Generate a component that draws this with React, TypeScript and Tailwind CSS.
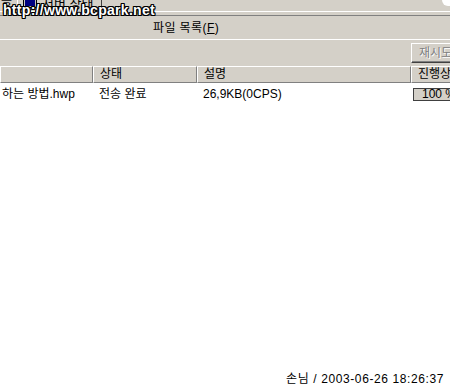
import React from "react";

const F = { fontFamily: '"Liberation Sans", "Noto Sans CJK KR", sans-serif' } as React.CSSProperties;

function HeaderCell({ w, children }: { w: string; children?: React.ReactNode }) {
  return (
    <div
      className={`${w} h-full shrink-0 border-t border-l border-t-white border-l-white border-r border-b border-r-[#808080] border-b-[#808080] bg-[#d4d0c8] pl-[6px] text-[12px] leading-[15px] text-black overflow-hidden whitespace-nowrap`}
    >
      {children}
    </div>
  );
}

export default function App() {
  return (
    <div className="relative w-[450px] h-[390px] bg-white overflow-hidden flex flex-col" style={F}>
      {/* top tab strip */}
      <div className="h-[11px] bg-[#d4d0c8] flex items-start shrink-0 overflow-hidden">
        <div className="w-[17px] text-[12px] leading-[12px] -mt-[5px] pl-[1px]">응</div>
        <div className="w-[85px] h-[11px] border-l border-l-white border-r border-r-[#404040] flex items-start gap-[4px] pl-[4px] overflow-hidden">
          <svg width="16" height="12" viewBox="0 0 16 12" className="-mt-[2px]">
            <rect x="1.5" y="0.5" width="13" height="9" fill="#c0c0c0" stroke="#000" />
            <rect x="3" y="2" width="10" height="6" fill="#000080" />
          </svg>
          <span className="text-[13px] leading-[13px] -mt-[3px]">서버 상태</span>
        </div>
      </div>
      <div className="h-px bg-white shrink-0" />
      <div className="h-[3px] bg-[#d4d0c8] shrink-0" />
      <div className="h-px bg-[#808080] shrink-0" />
      {/* title */}
      <div className="h-[23px] bg-[#d4d0c8] shrink-0 flex items-center pl-[153px] text-[12px] tracking-[0.4px] text-black">
        파일 목록(<span className="underline">F</span>)
      </div>
      <div className="h-px bg-white shrink-0" />
      {/* button row */}
      <div className="h-[26px] bg-[#d4d0c8] shrink-0 flex items-start justify-end pt-[3px]">
        <div className="w-[40px] h-[20px] border-t border-l border-white border-r-0 border-b border-b-[#404040] ml-auto translate-x-[1px] bg-[#d4d0c8] overflow-hidden">
          <div className="h-full border-b border-b-[#808080] pl-[7px] text-[12px] leading-[18px] text-[#808080] whitespace-nowrap" style={{ textShadow: "1px 1px 0 #fff" }}>
            재시도
          </div>
        </div>
      </div>
      {/* list header */}
      <div className="h-[17px] shrink-0 flex">
        <HeaderCell w="w-[93px]" />
        <HeaderCell w="w-[104px]">상태</HeaderCell>
        <HeaderCell w="w-[214px]">설명</HeaderCell>
        <HeaderCell w="w-[60px]">진행상황</HeaderCell>
      </div>
      {/* row */}
      <div className="h-[16px] shrink-0 flex items-center mt-[3px] text-[12px] text-black whitespace-nowrap">
        <div className="w-[93px] pl-[2px] shrink-0">하는 방법.hwp</div>
        <div className="w-[104px] pl-[6px] shrink-0">전송 완료</div>
        <div className="w-[216px] pl-[6px] shrink-0">26,9KB(0CPS)</div>
        <div className="w-[50px] h-[13px] shrink-0 border border-[#404040] bg-[#d4d0c8] text-[12px] leading-[11px] pl-[8px]">100 %</div>
      </div>
      <div className="flex-1" />
      <div className="shrink-0 flex justify-end pr-[6px] pb-[4px] text-[12px] leading-[14px] tracking-[0.6px] text-black">
        손님 / 2003-06-26 18:26:37
      </div>

      {/* watermark overlay */}
      <div
        className="absolute left-[3px] top-[2px] text-[14px] font-bold leading-[17px] text-white tracking-[0.3px]"
        style={{
          fontFamily: '"Liberation Sans", sans-serif',
          textShadow:
            "1px 0 0 #000, -1px 0 0 #000, 0 1px 0 #000, 0 -1px 0 #000, 1px 1px 0 #000, -1px -1px 0 #000, 1px -1px 0 #000, -1px 1px 0 #000",
        }}
      >
        http://www.bcpark.net
      </div>
      {/* window corner */}
      <div className="absolute right-0 top-0 w-[8px] h-[6px] bg-white rounded-bl-[8px]" />
    </div>
  );
}
